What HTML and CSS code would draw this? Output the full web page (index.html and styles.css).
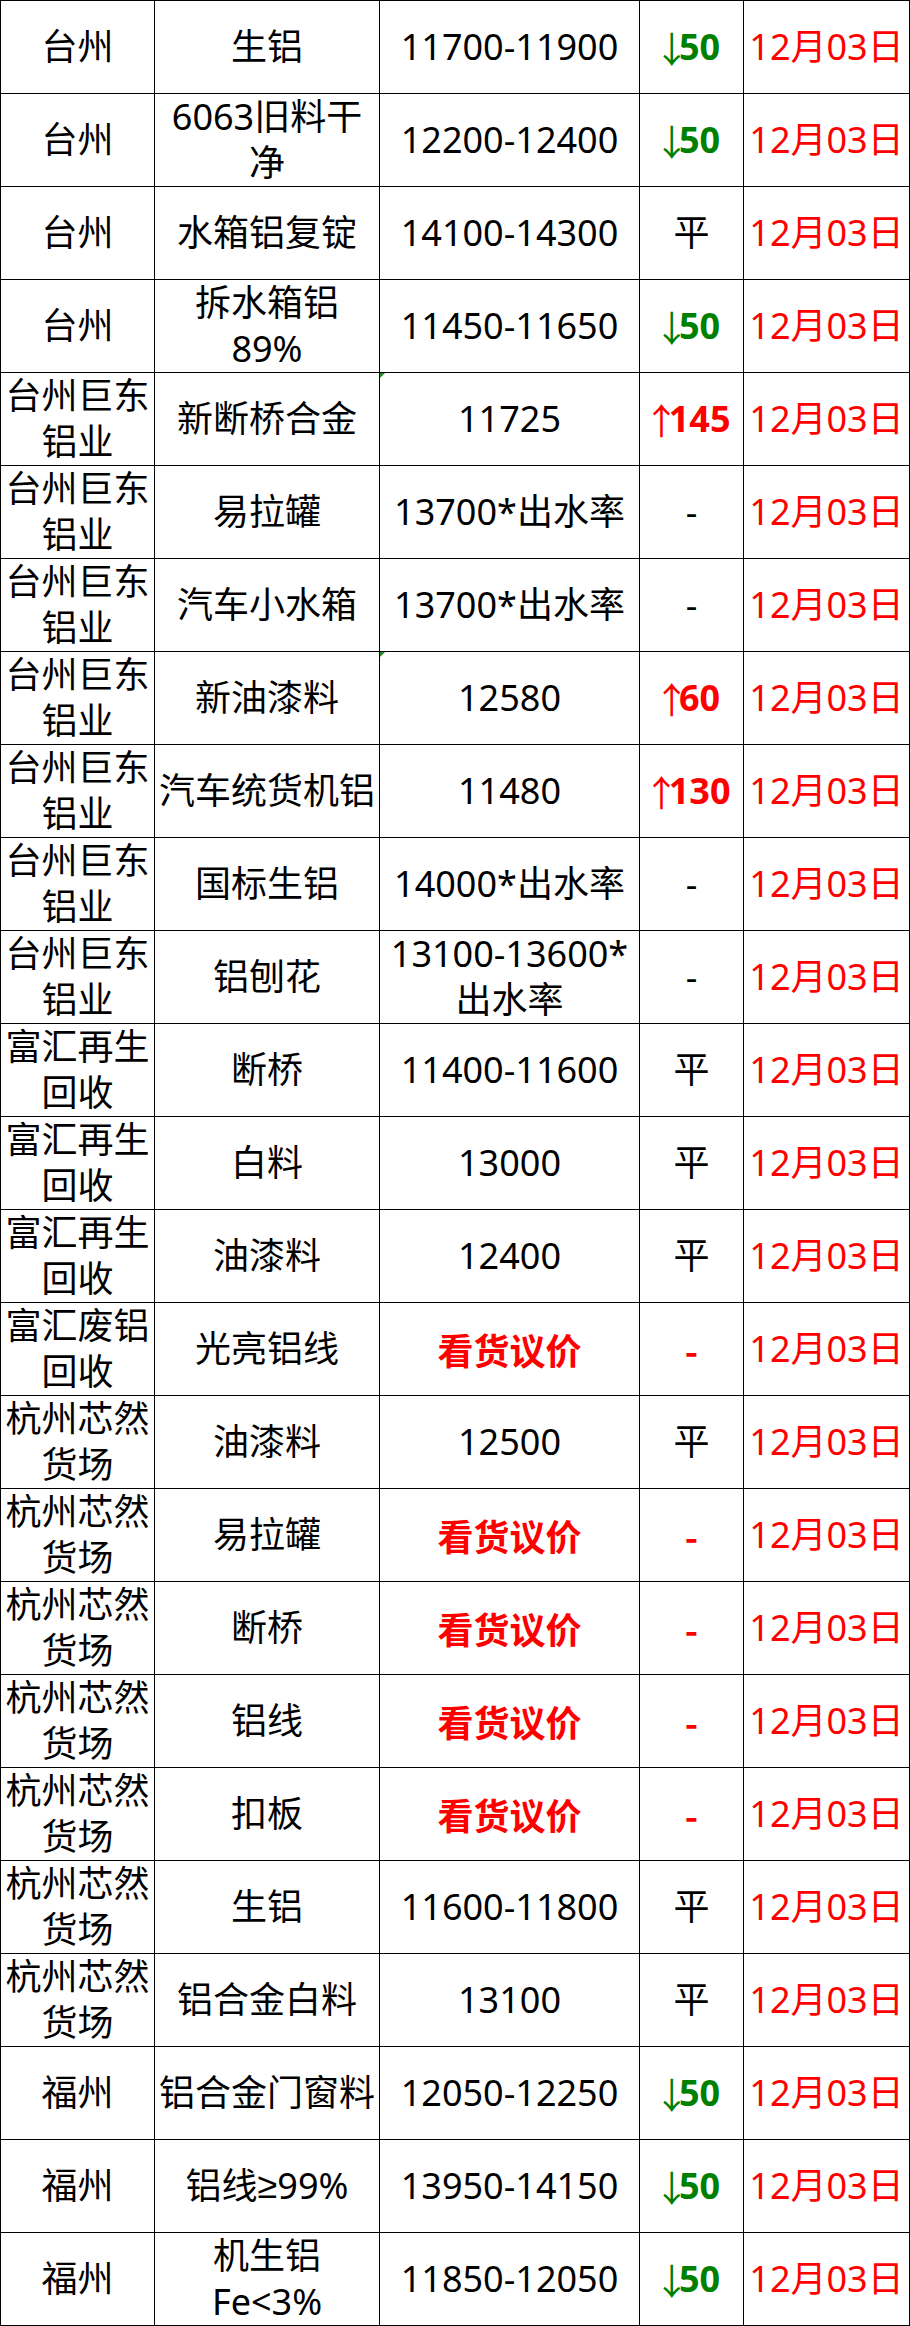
FILE: index.html
```html
<!DOCTYPE html>
<html lang="zh-CN">
<head>
<meta charset="utf-8">
<title>铝价表</title>
<link rel="stylesheet" href="styles.css">
</head>
<body>
<table class="sheet">
  <colgroup>
    <col class="w1"><col class="w2"><col class="w3"><col class="w4"><col class="w5">
  </colgroup>
  <tbody>
    <tr><td><div class="c">台州</div></td><td><div class="c">生铝</div></td><td><div class="c">11700-11900</div></td><td><div class="c dn"><span class="ar">↓</span>50</div></td><td><div class="c dt">12月03日</div></td></tr>
    <tr><td><div class="c">台州</div></td><td><div class="c">6063旧料干<br>净</div></td><td><div class="c">12200-12400</div></td><td><div class="c dn"><span class="ar">↓</span>50</div></td><td><div class="c dt">12月03日</div></td></tr>
    <tr><td><div class="c">台州</div></td><td><div class="c">水箱铝复锭</div></td><td><div class="c">14100-14300</div></td><td><div class="c">平</div></td><td><div class="c dt">12月03日</div></td></tr>
    <tr><td><div class="c">台州</div></td><td><div class="c">拆水箱铝<br>89%</div></td><td><div class="c">11450-11650</div></td><td><div class="c dn"><span class="ar">↓</span>50</div></td><td><div class="c dt">12月03日</div></td></tr>
    <tr><td><div class="c">台州巨东<br>铝业</div></td><td><div class="c">新断桥合金</div></td><td class="flag"><div class="c">11725</div></td><td><div class="c up"><span class="ar">↑</span>145</div></td><td><div class="c dt">12月03日</div></td></tr>
    <tr><td><div class="c">台州巨东<br>铝业</div></td><td><div class="c">易拉罐</div></td><td><div class="c">13700*出水率</div></td><td><div class="c">-</div></td><td><div class="c dt">12月03日</div></td></tr>
    <tr><td><div class="c">台州巨东<br>铝业</div></td><td><div class="c">汽车小水箱</div></td><td><div class="c">13700*出水率</div></td><td><div class="c">-</div></td><td><div class="c dt">12月03日</div></td></tr>
    <tr><td><div class="c">台州巨东<br>铝业</div></td><td><div class="c">新油漆料</div></td><td class="flag"><div class="c">12580</div></td><td><div class="c up"><span class="ar">↑</span>60</div></td><td><div class="c dt">12月03日</div></td></tr>
    <tr><td><div class="c">台州巨东<br>铝业</div></td><td><div class="c">汽车统货机铝</div></td><td><div class="c">11480</div></td><td><div class="c up"><span class="ar">↑</span>130</div></td><td><div class="c dt">12月03日</div></td></tr>
    <tr><td><div class="c">台州巨东<br>铝业</div></td><td><div class="c">国标生铝</div></td><td><div class="c">14000*出水率</div></td><td><div class="c">-</div></td><td><div class="c dt">12月03日</div></td></tr>
    <tr><td><div class="c">台州巨东<br>铝业</div></td><td><div class="c">铝刨花</div></td><td><div class="c">13100-13600*<br>出水率</div></td><td><div class="c">-</div></td><td><div class="c dt">12月03日</div></td></tr>
    <tr><td><div class="c">富汇再生<br>回收</div></td><td><div class="c">断桥</div></td><td><div class="c">11400-11600</div></td><td><div class="c">平</div></td><td><div class="c dt">12月03日</div></td></tr>
    <tr><td><div class="c">富汇再生<br>回收</div></td><td><div class="c">白料</div></td><td><div class="c">13000</div></td><td><div class="c">平</div></td><td><div class="c dt">12月03日</div></td></tr>
    <tr><td><div class="c">富汇再生<br>回收</div></td><td><div class="c">油漆料</div></td><td><div class="c">12400</div></td><td><div class="c">平</div></td><td><div class="c dt">12月03日</div></td></tr>
    <tr><td><div class="c">富汇废铝<br>回收</div></td><td><div class="c">光亮铝线</div></td><td><div class="c ask">看货议价</div></td><td><div class="c ask">-</div></td><td><div class="c dt">12月03日</div></td></tr>
    <tr><td><div class="c">杭州芯然<br>货场</div></td><td><div class="c">油漆料</div></td><td><div class="c">12500</div></td><td><div class="c">平</div></td><td><div class="c dt">12月03日</div></td></tr>
    <tr><td><div class="c">杭州芯然<br>货场</div></td><td><div class="c">易拉罐</div></td><td><div class="c ask">看货议价</div></td><td><div class="c ask">-</div></td><td><div class="c dt">12月03日</div></td></tr>
    <tr><td><div class="c">杭州芯然<br>货场</div></td><td><div class="c">断桥</div></td><td><div class="c ask">看货议价</div></td><td><div class="c ask">-</div></td><td><div class="c dt">12月03日</div></td></tr>
    <tr><td><div class="c">杭州芯然<br>货场</div></td><td><div class="c">铝线</div></td><td><div class="c ask">看货议价</div></td><td><div class="c ask">-</div></td><td><div class="c dt">12月03日</div></td></tr>
    <tr><td><div class="c">杭州芯然<br>货场</div></td><td><div class="c">扣板</div></td><td><div class="c ask">看货议价</div></td><td><div class="c ask">-</div></td><td><div class="c dt">12月03日</div></td></tr>
    <tr><td><div class="c">杭州芯然<br>货场</div></td><td><div class="c">生铝</div></td><td><div class="c">11600-11800</div></td><td><div class="c">平</div></td><td><div class="c dt">12月03日</div></td></tr>
    <tr><td><div class="c">杭州芯然<br>货场</div></td><td><div class="c">铝合金白料</div></td><td><div class="c">13100</div></td><td><div class="c">平</div></td><td><div class="c dt">12月03日</div></td></tr>
    <tr><td><div class="c">福州</div></td><td><div class="c">铝合金门窗料</div></td><td><div class="c">12050-12250</div></td><td><div class="c dn"><span class="ar">↓</span>50</div></td><td><div class="c dt">12月03日</div></td></tr>
    <tr><td><div class="c">福州</div></td><td><div class="c">铝线<span class="sym">≥</span>99%</div></td><td><div class="c">13950-14150</div></td><td><div class="c dn"><span class="ar">↓</span>50</div></td><td><div class="c dt">12月03日</div></td></tr>
    <tr><td><div class="c">福州</div></td><td><div class="c">机生铝<br>Fe&lt;3%</div></td><td><div class="c">11850-12050</div></td><td><div class="c dn"><span class="ar">↓</span>50</div></td><td><div class="c dt">12月03日</div></td></tr>
  </tbody>
</table>
</body>
</html>
```

FILE: styles.css
```css
html, body {
  margin: 0;
  padding: 0;
  background: #ffffff;
}

.sheet {
  width: 910px;
  border-collapse: collapse;
  table-layout: fixed;
  font-family: "Noto Sans", "Noto Sans CJK SC", sans-serif;
  font-size: 36px;
  color: #000000;
}

.w1 { width: 154px; }
.w2 { width: 225px; }
.w3 { width: 260px; }
.w4 { width: 104px; }
.w5 { width: 166px; }

.sheet td {
  border: 1px solid #000000;
  padding: 0;
  height: 92px;
  position: relative;
}

.c {
  height: 92px;
  display: flex;
  align-items: center;
  justify-content: center;
  text-align: center;
  line-height: 46px;
  white-space: nowrap;
}

.dt { color: #ff0000; }

.dn {
  color: #008000;
  font-weight: 700;
}

.up {
  color: #ff0000;
  font-weight: 700;
}

.ar {
  font-family: "Noto Sans CJK SC", sans-serif;
  font-weight: 400;
  letter-spacing: -0.3em;
  margin-left: -0.25em;
}

.sym {
  font-family: "Liberation Sans", sans-serif;
}

.ask {
  color: #ff0000;
  font-weight: 700;
  font-family: "Noto Sans CJK SC", sans-serif;
}

.flag::before {
  content: "";
  position: absolute;
  left: 0;
  top: 0;
  border-top: 5px solid #1f8a1f;
  border-right: 5px solid transparent;
}
```
